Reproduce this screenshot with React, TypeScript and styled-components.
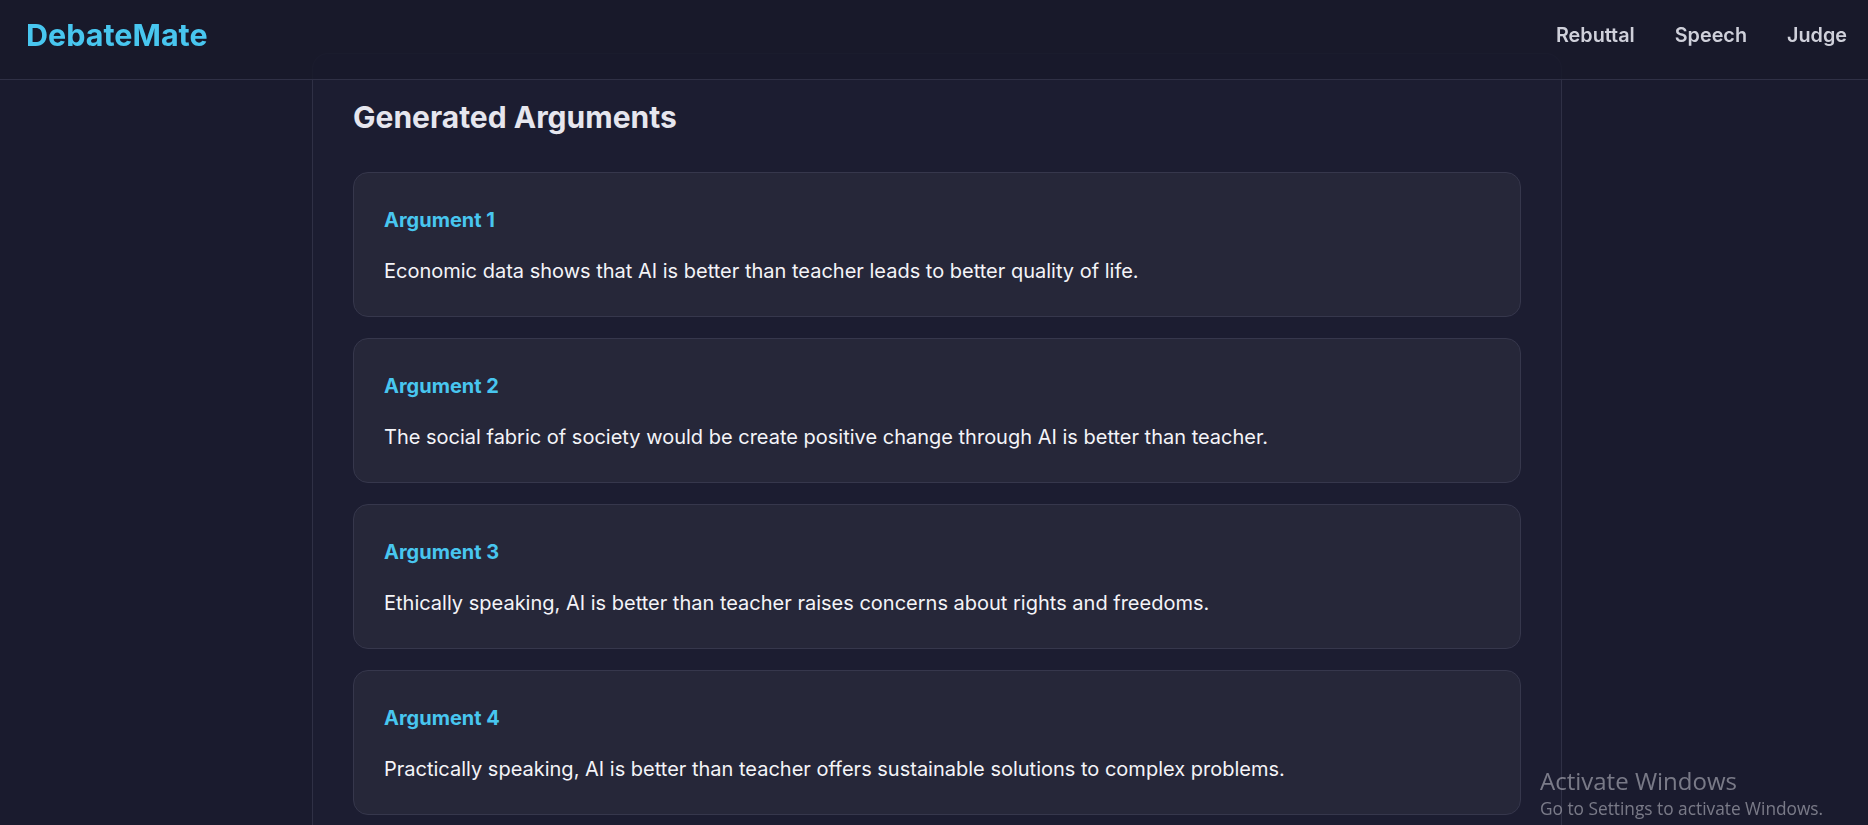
import React from "react";
import styled, { createGlobalStyle } from "styled-components";

const GlobalStyle = createGlobalStyle`
  * {
    box-sizing: border-box;
  }
  body {
    margin: 0;
    background: #1a1b2e;
    font-family: Inter, "Liberation Sans", sans-serif;
    color: #f2f2f7;
    overflow: hidden;
  }
`;

const Header = styled.header`
  position: fixed;
  top: 0;
  left: 0;
  right: 0;
  height: 80px;
  z-index: 10;
  display: flex;
  align-items: flex-start;
  justify-content: space-between;
  padding: 16px 21px 0 26px;
  background: rgba(24, 25, 42, 0.88);
  border-bottom: 1px solid #2f3045;
`;

const Logo = styled.div`
  font-size: 30.5px;
  font-weight: 700;
  color: #48c6ef;
`;

const NavLinks = styled.nav`
  display: flex;
  gap: 40px;
  padding-top: 7px;
`;

const NavLink = styled.a`
  font-size: 19.8px;
  font-weight: 600;
  color: #cfd0da;
  text-decoration: none;
  cursor: pointer;
`;

const Page = styled.main`
  padding: 53px 0 0 6px;
`;

const Panel = styled.section`
  width: 1250px;
  margin: 0 auto;
  min-height: 900px;
  padding: 40px;
  background: #1c1d31;
  border: 1px solid #2f3045;
  border-bottom: none;
  border-radius: 16px 16px 0 0;
`;

const Title = styled.h2`
  margin: 5px 0 37px;
  font-size: 30px;
  line-height: 1.21;
  font-weight: 700;
  color: #e6e6ee;
`;

const CardList = styled.div`
  display: flex;
  flex-direction: column;
  gap: 21px;
`;

const Card = styled.article`
  height: 145px;
  padding: 35px 30px 0;
  background: #262739;
  border: 1px solid #36374c;
  border-radius: 15px;
`;

const CardTitle = styled.h3`
  margin: 0 0 25px;
  font-size: 20px;
  line-height: 1.2;
  font-weight: 700;
  color: #48c6ef;
`;

const CardText = styled.p`
  margin: 0;
  font-size: 20px;
  line-height: 1.4;
  color: #f4f4f8;
`;

const Watermark = styled.div`
  position: fixed;
  left: 1540px;
  top: 764px;
  font-family: "Open Sans", "Noto Sans", sans-serif;
  color: rgba(200, 200, 210, 0.55);
  z-index: 20;
  pointer-events: none;
`;

const WatermarkTitle = styled.div`
  font-size: 24px;
  line-height: 33px;
`;

const WatermarkText = styled.div`
  font-size: 17.3px;
  line-height: 24px;
`;

const argumentsList = [
  "Economic data shows that AI is better than teacher leads to better quality of life.",
  "The social fabric of society would be create positive change through AI is better than teacher.",
  "Ethically speaking, AI is better than teacher raises concerns about rights and freedoms.",
  "Practically speaking, AI is better than teacher offers sustainable solutions to complex problems.",
];

export default function App() {
  return (
    <>
      <GlobalStyle />
      <Header>
        <Logo>DebateMate</Logo>
        <NavLinks>
          <NavLink>Rebuttal</NavLink>
          <NavLink>Speech</NavLink>
          <NavLink>Judge</NavLink>
        </NavLinks>
      </Header>
      <Page>
        <Panel>
          <Title>Generated Arguments</Title>
          <CardList>
            {argumentsList.map((text, i) => (
              <Card key={i}>
                <CardTitle>Argument {i + 1}</CardTitle>
                <CardText>{text}</CardText>
              </Card>
            ))}
          </CardList>
        </Panel>
      </Page>
      <Watermark>
        <WatermarkTitle>Activate Windows</WatermarkTitle>
        <WatermarkText>Go to Settings to activate Windows.</WatermarkText>
      </Watermark>
    </>
  );
}
